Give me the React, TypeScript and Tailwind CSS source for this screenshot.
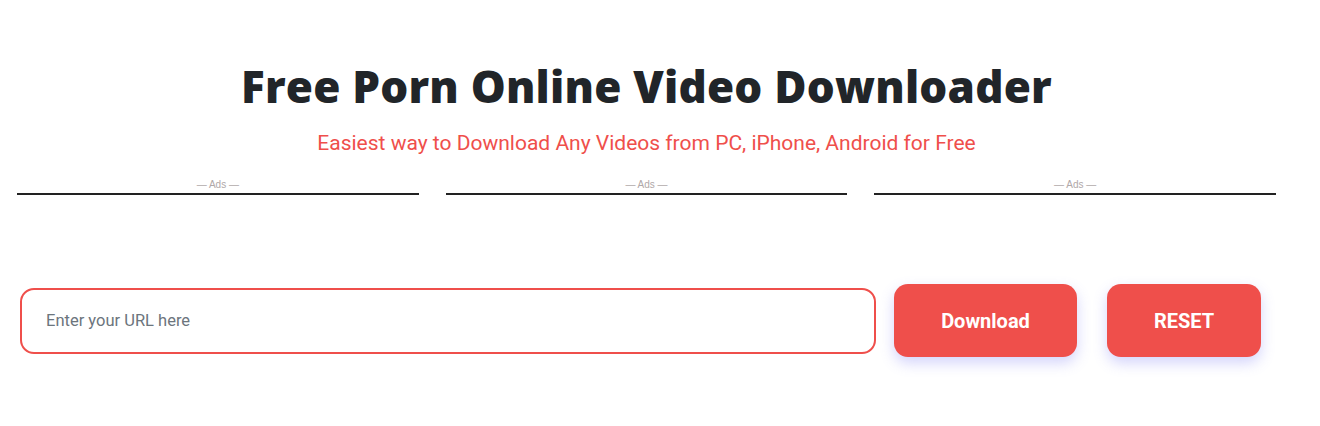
export default function App() {
  const ads = [0, 1, 2];
  return (
    <div className="min-h-[426px] w-full bg-white font-['Roboto',sans-serif]">
      <div className="w-[1293px] pt-[56px]">
        <h1 className="text-center font-['Open_Sans',sans-serif] text-[44px] leading-[60px] font-extrabold tracking-[0.2px] text-[#212529]">
          Free Porn Online Video Downloader
        </h1>
        <p className="mt-[12px] text-center text-[21px] leading-[30px] text-[#ef4f4b]">
          Easiest way to Download Any Videos from PC, iPhone, Android for Free
        </p>
        <div className="mt-[20px] flex gap-[27px] px-[17px]">
          {ads.map((i) => (
            <div key={i} className="flex w-[402px] flex-col items-center">
              <span className="font-['Liberation_Sans',sans-serif] text-[10px] leading-[14px] text-[#b0a8a8]">
                — Ads —
              </span>
              <div className="mt-[1px] h-[2px] w-full bg-[#222]" />
            </div>
          ))}
        </div>
        <div className="mt-[89px] flex items-center pl-[20px]">
          <input
            className="h-[66px] w-[856px] rounded-[14px] border-2 border-[#ef4f4b] bg-white px-[24px] text-[16.5px] text-[#333] outline-none placeholder:text-[#6c757d]"
            placeholder="Enter your URL here"
          />
          <button className="ml-[18px] h-[73px] w-[183px] rounded-[14px] bg-[#ef4f4b] text-[20px] font-bold text-white shadow-[0_6px_14px_rgba(99,102,241,0.28)]">
            Download
          </button>
          <button className="ml-[30px] h-[73px] w-[154px] rounded-[14px] bg-[#ef4f4b] text-[20px] font-bold text-white shadow-[0_6px_14px_rgba(99,102,241,0.28)]">
            RESET
          </button>
        </div>
      </div>
    </div>
  );
}
